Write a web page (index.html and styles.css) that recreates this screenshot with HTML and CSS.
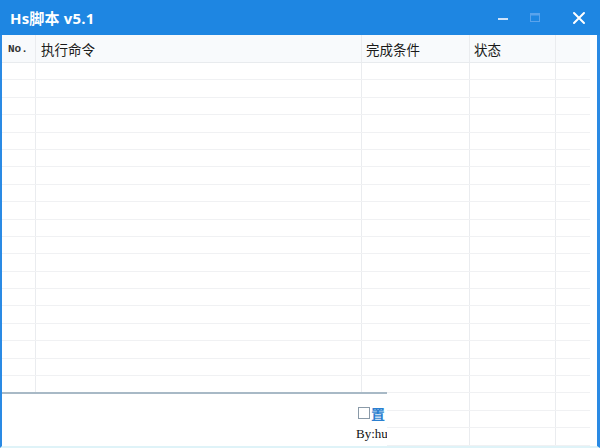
FILE: index.html
```html
<!DOCTYPE html>
<html>
<head>
<meta charset="utf-8">
<link rel="stylesheet" href="styles.css">
</head>
<body>
<div class="window">
  <div class="titlebar">
    <span class="title">Hs脚本 v5.1</span>
    <div class="controls">
      <svg class="ctl" width="14" height="14" viewBox="0 0 14 14"><rect x="2" y="7" width="10" height="2" fill="#cfe3fa"/></svg>
      <svg class="ctl" width="14" height="14" viewBox="0 0 14 14"><rect x="2.5" y="2.5" width="9" height="8" fill="none" stroke="#5aa3ec" stroke-width="1"/><rect x="2.5" y="2.5" width="9" height="2" fill="#5aa3ec"/></svg>
      <svg class="ctl close" width="14" height="14" viewBox="0 0 14 14"><path d="M2 2 L12 12 M12 2 L2 12" stroke="#ffffff" stroke-width="2" stroke-linecap="round"/></svg>
    </div>
  </div>
  <div class="body">
    <div class="table">
      <div class="row head">
        <div class="c c1 mono">No.</div>
        <div class="c c2">执行命令</div>
        <div class="c c3">完成条件</div>
        <div class="c c4">状态</div>
        <div class="c c5"></div>
      </div>
      <div class="rows" id="rows"></div>
    </div>
    <div class="panel">
      <div class="opt"><span class="box"></span><span class="lbl">置</span></div>
      <div class="by">By:hu</div>
    </div>
  </div>
</div>
<script>
var r = document.getElementById('rows');
for (var i = 0; i < 22; i++) {
  var d = document.createElement('div');
  d.className = 'row';
  d.innerHTML = '<div class="c c1"></div><div class="c c2"></div><div class="c c3"></div><div class="c c4"></div><div class="c c5"></div>';
  r.appendChild(d);
}
</script>
</body>
</html>
```
FILE: styles.css
```css
html, body { margin: 0; padding: 0; }
body { width: 600px; height: 448px; overflow: hidden; background: #fff; font-family: "Noto Sans CJK SC", "Noto Sans", sans-serif; }
.window { width: 600px; height: 448px; display: flex; flex-direction: column; box-sizing: border-box; border-left: 2px solid #2a8ae4; border-right: 3px solid #2a8ae4; border-bottom: 2px solid #dff3f8; }
.titlebar { height: 35px; margin-left: -2px; margin-right: -3px; background: #1e86e2; display: flex; align-items: center; justify-content: space-between; flex: none; }
.title { color: #fff; font-weight: bold; font-size: 15px; padding-left: 10px; font-family: "Open Sans", "Noto Sans CJK SC", sans-serif; letter-spacing: 0.2px; }
.controls { display: flex; align-items: center; gap: 18px; padding-right: 14px; }
.ctl { display: block; }
.controls .ctl:nth-child(2) { margin-right: 12px; }
.body { position: relative; flex: 1; overflow: hidden; }
.table { display: flex; flex-direction: column; padding-right: 7px; }
.row { display: flex; height: 17.4px; border-bottom: 1px solid #f0f1f3; box-sizing: border-box; }
.row.head { height: 28px; background: #f8fafc; border-bottom: 1px solid #e8ebee; }
.c { border-right: 1px solid #eaecef; box-sizing: border-box; font-size: 13.5px; color: #1a1a1a; line-height: 28px; padding-left: 4px; white-space: nowrap; }
.c1 { width: 34px; }
.c2 { width: 326px; }
.c3 { width: 108px; }
.c4 { width: 86px; }
.c5 { flex: 1; border-right: none; }
.mono { font-family: "Liberation Mono", "DejaVu Sans Mono", monospace; font-size: 11px; padding-left: 6px; font-weight: bold; color: #333; }
.head .c2 { padding-left: 5px; }
.panel { position: absolute; left: 0; top: 357px; width: 385px; height: 60px; background: #fff; border-top: 2px solid #a8b9c6; overflow: hidden; }
.opt { position: absolute; left: 356px; top: 12px; display: flex; align-items: center; gap: 1px; }
.box { width: 12px; height: 12px; border: 1px solid #8a9aa8; box-sizing: border-box; display: block; }
.lbl { color: #2b7fd0; font-size: 14px; font-weight: bold; line-height: 14px; }
.by { position: absolute; left: 354px; top: 32px; font-family: "Liberation Serif", serif; font-size: 13px; color: #111; }
```
